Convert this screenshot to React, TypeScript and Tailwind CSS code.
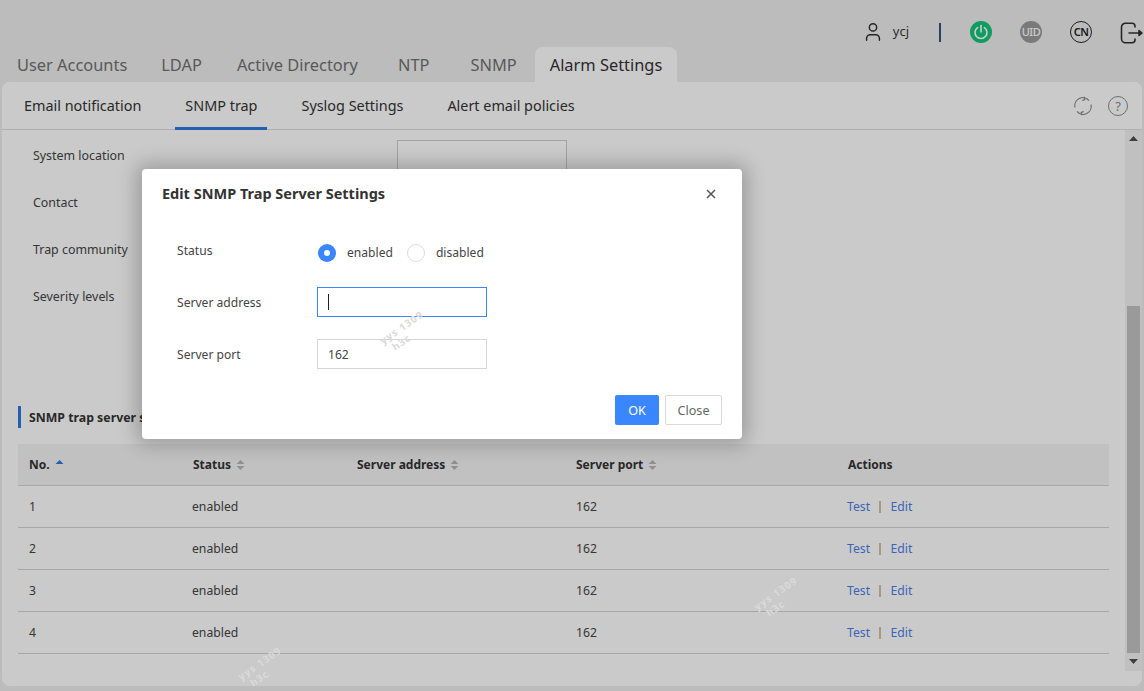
import { User } from "lucide-react";

const FONT = "font-['Noto_Sans','Open_Sans',sans-serif]";

const topTabs = [
  { label: "User Accounts", cls: "ml-[2px]" },
  { label: "LDAP", cls: "ml-[4px]" },
  { label: "Active Directory", cls: "ml-[5px]" },
  { label: "NTP", cls: "ml-[10px]" },
  { label: "SNMP", cls: "ml-[11px]" },
];

const subTabs = ["Email notification", "SNMP trap", "Syslog Settings", "Alert email policies"];

const formRows = ["System location", "Contact", "Trap community", "Severity levels"];

const rows = ["1", "2", "3", "4"];

function SortIcon({ active }: { active?: boolean }) {
  return (
    <svg width="9" height="12" viewBox="0 0 9 12" className="ml-[5px]">
      <path d="M4.5 1 8.5 5H.5z" fill={active ? "#2f76dd" : "#b5b5b5"} />
      {!active && <path d="M4.5 11 8.5 7H.5z" fill="#b5b5b5" />}
    </svg>
  );
}

function HeaderIcons() {
  return (
    <div className="h-[47px] flex items-center justify-end shrink-0 pt-[17px] overflow-hidden">
      <User className="w-[22px] h-[22px] text-[#303030] mr-[9px]" strokeWidth={1.6} />
      <span className="text-[13px] text-[#3a3a3a] mr-[30px]">ycj</span>
      <div className="w-[2px] h-[19px] bg-[#34507a] mr-[29px]" />
      <div className="w-[22px] h-[22px] rounded-full bg-[#13c47c] flex items-center justify-center mr-[28px]">
        <svg width="16" height="16" viewBox="0 0 16 16" fill="none" stroke="#fff" strokeWidth="1.6" strokeLinecap="round">
          <path d="M8 1.5v6.5" />
          <path d="M4.6 3.6a6 6 0 1 0 6.8 0" />
        </svg>
      </div>
      <div className="w-[22px] h-[22px] rounded-full bg-[#999] flex items-center justify-center text-white text-[11px] font-medium tracking-[-0.5px] mr-[28px]">
        UID
      </div>
      <div className="w-[22px] h-[22px] rounded-full border-[1.5px] border-[#222] flex items-center justify-center text-[#222] text-[11px] font-semibold tracking-[-0.5px] mr-[28px]">
        CN
      </div>
      <svg width="23" height="22" viewBox="0 0 23 22" fill="none" stroke="#303030" strokeWidth="1.6" strokeLinecap="round" strokeLinejoin="round" className="mr-[1px] mt-[1px]">
        <path d="M15 5V4.2A3 3 0 0 0 12 1.2H5.5A4 4 0 0 0 1.5 5.2v11.6a4 4 0 0 0 4 4H12a3 3 0 0 0 3-3V17" />
        <path d="M9 11h10" />
        <path d="M19 8.6 22 11l-3 2.4z" fill="#303030" />
      </svg>
    </div>
  );
}

function Page() {
  return (
    <div className="h-full flex flex-col">
      <HeaderIcons />
      <div className="h-[35px] flex shrink-0 text-[16.4px] text-[#707070]">
        {topTabs.map((t) => (
          <div key={t.label} className={`px-[15px] leading-[35px] ${t.cls}`}>
            {t.label}
          </div>
        ))}
        <div className="ml-[3px] px-[15px] leading-[35px] bg-[#fdfdfd] rounded-t-lg text-[#333]">Alarm Settings</div>
      </div>

      <div className="flex-1 min-h-0 ml-[2px] mr-[2px] mb-[5px] bg-[#fdfdfd] rounded-lg flex flex-col overflow-hidden">
        <div className="h-[48px] shrink-0 border-b border-[#ddd] flex items-stretch pl-[12px] pr-[14px] gap-[24px] text-[14.4px] text-[#333]">
          {subTabs.map((t) => (
            <div
              key={t}
              className={`px-[10px] leading-[47px] h-[48px] ${t === "SNMP trap" ? "border-b-[3px] border-[#2f76dd]" : ""}`}
            >
              {t}
            </div>
          ))}
          <div className="ml-auto flex items-center gap-[15px]">
            <svg width="20" height="20" viewBox="0 0 20 20" fill="none" stroke="#8a8a8a" strokeWidth="1.2">
              <path d="M2 11.5A8 8 0 0 1 16 4.6" />
              <path d="M18 8.5A8 8 0 0 1 4 15.4" />
              <path d="M11 .8 11.8 3.4 9.4 4.6" />
              <path d="M9 19.2 8.2 16.6 10.6 15.4" />
            </svg>
            <div className="w-[20px] h-[20px] rounded-full border border-[#8a8a8a] text-[#8a8a8a] text-[13px] leading-[18px] text-center">
              ?
            </div>
          </div>
        </div>

        <div className="flex-1 min-h-0 flex">
          <div className="flex-1 min-w-0 overflow-hidden pl-[16px] pr-[16px]">
            <div className="h-[276px] pl-[15px] pt-[2px] text-[12.4px] text-[#444]">
              {formRows.map((label, i) => (
                <div key={label} className="h-[47px] flex items-center">
                  <span className="w-[364px] pt-[2px]">{label}</span>
                  {i === 0 && <div className="w-[170px] h-[31px] mt-[-1px] border border-[#ccc] bg-white" />}
                </div>
              ))}
            </div>
            <div className="h-[22px] border-l-[3px] border-[#2f76dd] pl-[8px] text-[12.3px] font-bold text-[#333] leading-[24px]">
              SNMP trap server settings
            </div>
            <div className="mt-[16px]">
              <div className="h-[42px] bg-[#f2f2f2] border-b border-[#d3d3d3] grid grid-cols-[164px_164px_219px_272px_1fr] items-center text-[12px] font-bold text-[#333] pl-[11px]">
                <div className="flex items-center">No.<SortIcon active /></div>
                <div className="flex items-center">Status<SortIcon /></div>
                <div className="flex items-center">Server address<SortIcon /></div>
                <div className="flex items-center">Server port<SortIcon /></div>
                <div>Actions</div>
              </div>
              {rows.map((n) => (
                <div key={n} className="h-[42px] pt-[2px] border-b border-[#d3d3d3] grid grid-cols-[163px_165px_219px_271px_1fr] items-center text-[12.2px] text-[#444] pl-[11px]">
                  <div>{n}</div>
                  <div>enabled</div>
                  <div />
                  <div>162</div>
                  <div className="flex items-center text-[#4a7ee8]">
                    <span>Test</span>
                    <span className="w-[1.5px] h-[12px] bg-[#d9b9a9] ml-[9px] mr-[10px]" />
                    <span>Edit</span>
                  </div>
                </div>
              ))}
            </div>
          </div>

          <div className="w-[17px] h-[541px] shrink-0 bg-[#f1f1f1] flex flex-col items-center pt-[6px]">
            <svg width="9" height="5" viewBox="0 0 9 5" className="shrink-0"><path d="M4.5 0 9 5H0z" fill="#505050" /></svg>
            <div className="w-[13px] h-[347px] mt-[165px] shrink-0 bg-[#c1c1c1]" />
            <svg width="9" height="5" viewBox="0 0 9 5" className="shrink-0 mt-[6px]"><path d="M4.5 5 9 0H0z" fill="#505050" /></svg>
          </div>
        </div>
      </div>
    </div>
  );
}

function Radio({ checked, label }: { checked?: boolean; label: string }) {
  return (
    <div className="flex items-center">
      {checked ? (
        <div className="w-[18px] h-[18px] rounded-full bg-[#3a86ff] flex items-center justify-center">
          <div className="w-[6px] h-[6px] rounded-full bg-white" />
        </div>
      ) : (
        <div className="w-[18px] h-[18px] rounded-full border border-[#ddd] bg-white" />
      )}
      <span className="ml-[11px]">{label}</span>
    </div>
  );
}

function Dialog() {
  return (
    <div className="absolute left-[142px] top-[169px] w-[600px] h-[270px] bg-white rounded-[4px] shadow-[0_0_20px_5px_rgba(0,0,0,0.24)] flex flex-col text-[12.1px] text-[#444]">
      <div className="flex items-center justify-between pl-[20px] pr-[26px] pt-[13px] h-[36px] shrink-0">
        <span className="text-[14.5px] font-bold text-[#333]">Edit SNMP Trap Server Settings</span>
        <svg width="10" height="10" viewBox="0 0 10 10" stroke="#555" strokeWidth="1.5">
          <path d="M1 1l8 8M9 1l-8 8" />
        </svg>
      </div>
      <div className="pl-[35px] pt-[33px] flex flex-col">
        <div className="flex items-center h-[30px]">
          <span className="w-[140px] -mt-[3px]">Status</span>
          <div className="flex items-center gap-[14px] pl-[1px]">
            <Radio checked label="enabled" />
            <Radio label="disabled" />
          </div>
        </div>
        <div className="flex items-center h-[30px] mt-[19px]">
          <span className="w-[140px] pt-[2px]">Server address</span>
          <div className="w-[170px] h-[30px] border border-[#3a86ff] pl-[10px] flex items-center">
            <div className="w-px h-[16px] bg-[#222]" />
          </div>
        </div>
        <div className="flex items-center h-[30px] mt-[22px]">
          <span className="w-[140px] pt-[2px]">Server port</span>
          <div className="w-[170px] h-[30px] border border-[#d5d5d5] pl-[10px] leading-[30px]">162</div>
        </div>
      </div>
      <div className="flex justify-end gap-[6px] pr-[20px] mt-[26px] text-[12.6px]">
        <div className="w-[44px] h-[30px] rounded-[2px] bg-[#3a86ff] text-white text-center leading-[32px]">OK</div>
        <div className="w-[57px] h-[30px] rounded-[2px] border border-[#d9d9d9] text-[#666] text-center leading-[30px]">Close</div>
      </div>
    </div>
  );
}

function Watermark({ cls }: { cls: string }) {
  return (
    <div className={`absolute -rotate-[35deg] text-[10px] leading-[12px] font-bold tracking-[1px] text-[#dadada] pointer-events-none ${cls}`}>
      yys 1309
      <br />
      <span className="ml-[6px]">h3c</span>
    </div>
  );
}

export default function App() {
  return (
    <div className={`relative w-full h-screen overflow-hidden bg-[#ebecec] ${FONT}`}>
      <Page />
      <div className="absolute inset-0 bg-black/20" />
      <Dialog />
      <Watermark cls="left-[380px] top-[320px]" />
      <Watermark cls="left-[754px] top-[586px]" />
      <Watermark cls="left-[238px] top-[656px]" />
    </div>
  );
}
